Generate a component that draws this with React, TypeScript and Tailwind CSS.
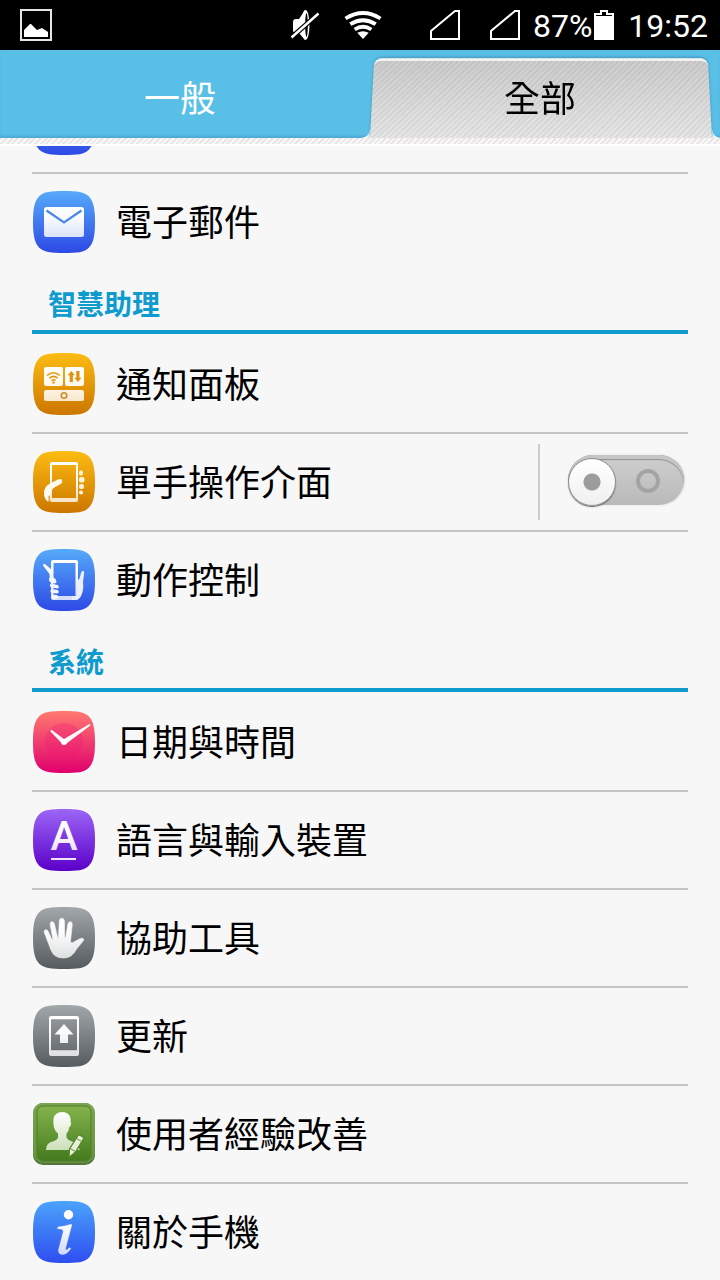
import type { ReactNode } from "react";
import { useState } from "react";

const SQUIRCLE =
  "M32 1c13 0 20.5 .8 25 5.5S63 19 63 32s-1.3 20.5-6 25.5S45 63 32 63s-20.500-.8-25-5.500S1 45 1 32 2.300 11.500 7 6.500 19 1 32 1z";

function AppIcon({
  id,
  from,
  to,
  children,
}: {
  id: string;
  from: string;
  to: string;
  children?: ReactNode;
}) {
  return (
    <svg viewBox="0 0 64 64" className="size-16 shrink-0" aria-hidden="true">
      <defs>
        <linearGradient id={`${id}-bg`} x1="0" y1="0" x2="0" y2="1">
          <stop offset="0" stopColor={from} />
          <stop offset="1" stopColor={to} />
        </linearGradient>
        <linearGradient
          id={`${id}-fg`}
          gradientUnits="userSpaceOnUse"
          x1="0"
          y1="12"
          x2="0"
          y2="54"
        >
          <stop offset="0" stopColor="#fff" />
          <stop offset="0.4" stopColor="#fff" stopOpacity="0.96" />
          <stop offset="1" stopColor="#fff" stopOpacity="0.76" />
        </linearGradient>
      </defs>
      <path d={SQUIRCLE} fill={`url(#${id}-bg)`} />
      {children}
    </svg>
  );
}

function MailIcon() {
  return (
    <AppIcon id="mail" from="#56aafa" to="#2d49e6">
      <rect x="12" y="17" width="40" height="30" rx="2.5" fill="url(#mail-fg)" />
      <path
        d="M14.5 20.5 32 32.5l17.5-12"
        fill="none"
        stroke="#4a87e8"
        strokeWidth="2.2"
      />
    </AppIcon>
  );
}

function PanelIcon() {
  return (
    <AppIcon id="panel" from="#fcbc12" to="#cc7600">
      <rect x="12" y="15" width="19" height="19" rx="2" fill="url(#panel-fg)" />
      <rect x="33" y="15" width="19" height="19" rx="2" fill="url(#panel-fg)" />
      <rect x="12" y="38" width="40" height="11" rx="2" fill="url(#panel-fg)" />
      <g fill="none" stroke="#e59a10" strokeWidth="1.6">
        <path d="M15 23.5q6.5-5.5 13 0M17.3 26.2q4.2-3.6 8.4 0M19.5 28.6q2-1.7 4 0" />
        <circle cx="32" cy="43.5" r="2.7" stroke="#c98a2a" />
      </g>
      <circle cx="21.5" cy="30.5" r="1.2" fill="#e59a10" />
      <path
        d="m39.3 19-3.6 4.3h2V30h3.2v-6.700h2zM45.900 30l-3.600-4.300h2V19h3.200v6.700h2z"
        fill="#e0920e"
      />
    </AppIcon>
  );
}

function OneHandIcon() {
  return (
    <AppIcon id="onehand" from="#fcbc12" to="#cc7600">
      <path
        d="M20 12h24q2 0 2 2v36q0 2-2 2H20q-2 0-2-2V14q0-2 2-2zm0 3v33h24V15z"
        fill="url(#onehand-fg)"
        fillRule="evenodd"
      />
      <path
        d="M15.500 51.500q-3.500-3-3.500-8.500 0-6.500 6-9.500l8-4q3-1.500 4 .8.900 2.300-1.500 3.600L21.500 38q-2 1.500-2.500 5l-1.500 3v5z"
        fill="#fffaf0"
      />
      <path d="M17 52v-6" stroke="#dd9412" strokeWidth="1" />
      <g fill="#fdf1dc">
        <rect x="47" y="20.5" width="4" height="5" rx="1.7" />
        <rect x="47" y="27" width="5.5" height="5.5" rx="2" />
        <rect x="47" y="34" width="5" height="5" rx="2" />
        <rect x="47" y="40.5" width="4" height="4" rx="1.7" />
      </g>
    </AppIcon>
  );
}

function MotionIcon() {
  return (
    <AppIcon id="motion" from="#56aafa" to="#2d49e6">
      <path
        d="M21 12h23q2 0 2 2v36q0 2-2 2H21q-2 0-2-2V14q0-2 2-2zm.500 3v33h22V15z"
        fill="url(#motion-fg)"
        fillRule="evenodd"
      />
      <path
        d="M45 33q3-2 3.500-6t2.500-4.300q1.500.3 1 3.800l-1 7.500q1 8-1.500 13-2 5-6 5h-4l1-4h4.500z"
        fill="#e8eefe"
      />
      <path
        d="M11 17.500q-.3-2.300 2.300-1.300L20 22v13l-2-1-.5-8z"
        fill="#f8faff"
      />
      <g fill="#f2f6ff">
        <path d="M18.500 29q5 0 6 4.500.3 2-2 2l-4-1.500q-2-1-1.500-3.500z" />
        <path d="M19 35.500l6.500 1.500q2.300 1.500.5 3.500l-6.500-1q-3-1.500-.5-4z" />
        <path d="M19.500 41l6 1q2.300 1.500.5 3.500l-6-.5q-3-1.500-.5-4z" />
        <path d="M20 46.500l5 .5q2 1.200.5 3l-3.500 1.500q-4.500-1.500-2-5z" />
      </g>
    </AppIcon>
  );
}

function ClockIcon() {
  return (
    <AppIcon id="clock" from="#ff7a70" to="#e0006c">
      <circle cx="32" cy="32" r="19" fill="#f2107a" fillOpacity="0.25" />
      <path
        d="m19.500 19.800 12.500 9.200 25.500-15q1.500.200.500 1.800L34.500 33.500q-2.500 1.500-5-.5L18.500 21.500q-.2-1.500 1-1.700z"
        fill="url(#clock-fg)"
      />
      <circle cx="32" cy="32" r="3" fill="#fff" />
    </AppIcon>
  );
}

function LanguageIcon() {
  return (
    <AppIcon id="lang" from="#9c66f6" to="#5a00c8">
      <text
        x="32"
        y="42"
        textAnchor="middle"
        fontSize="41"
        fontWeight="500"
        fill="url(#lang-fg)"
        className="font-['Roboto',sans-serif]"
      >
        A
      </text>
      <path d="M19 51h25" stroke="#f0e4fc" strokeWidth="2" />
    </AppIcon>
  );
}

function HandIcon() {
  return (
    <AppIcon id="hand" from="#a2a7aa" to="#555b5f">
      <path
        d="M12.300 26.500q-.6-2.300 1.200-2.800 1.800-.3 2.700 1.700l3.600 7.900q.7 1 1.100-.2L18.200 18.500q-.2-2.500 1.500-2.800 2-.2 2.600 2l3.200 13.500q.5 1 1 0l.8-16q.2-3 2.500-3t2.600 3l.3 16q.5 1 1 0l2.200-13q.5-2.800 2.600-2.500 2 .4 1.700 3l-1.700 16.500q.2 2 2 1.500l7.500-4q2.500-1.200 3.500.3.700 1.300-1.200 3L44.500 43q-4.500 9-13 9-9.500 0-12.500-8z"
        fill="url(#hand-fg)"
        stroke="#f4f4f4"
        strokeWidth=".7"
      />
    </AppIcon>
  );
}

function UpdateIcon() {
  return (
    <AppIcon id="update" from="#a2a7aa" to="#555b5f">
      <path
        d="M19 12h26q2 0 2 2v36q0 2-2 2H19q-2 0-2-2V14q0-2 2-2zm0 3.300v31h26v-31z"
        fill="url(#update-fg)"
        fillRule="evenodd"
      />
      <path d="m32 20 9.500 10.500H36v8.500h-8v-8.500h-5.500z" fill="url(#update-fg)" />
    </AppIcon>
  );
}

function UserIcon() {
  return (
    <svg viewBox="0 0 64 64" className="size-16 shrink-0" aria-hidden="true">
      <defs>
        <linearGradient id="user-bg" x1="0" y1="0" x2="0" y2="1">
          <stop offset="0" stopColor="#84b34c" />
          <stop offset="1" stopColor="#447a1e" />
        </linearGradient>
        <linearGradient id="user-edge" x1="0" y1="0" x2="0" y2="1">
          <stop offset="0" stopColor="#7aa44e" />
          <stop offset="1" stopColor="#66923e" />
        </linearGradient>
        <linearGradient id="user-fg" x1="0" y1="0" x2="0" y2="1">
          <stop offset="0" stopColor="#fff" />
          <stop offset="1" stopColor="#cddfba" />
        </linearGradient>
      </defs>
      <rect x="1" y="1" width="62" height="62" rx="10" fill="#55743c" />
      <rect x="1" y="1" width="62" height="60" rx="10" fill="url(#user-edge)" />
      <rect x="5" y="4" width="54" height="55" rx="6" fill="url(#user-bg)" stroke="#4f7f2a" />
      <path
        d="M30 10q8 0 8.800 7.500l-.3 2.500q1.300.5.300 3-.6 2-1.600 2.200Q37 29 34.500 31.500v4q1 2.500 5 3.700l3.500 1.500L48 48H14q0-6 5-8 6-1.500 7-4.500v-4q-3.500-3-4-6-1-5-.5-9Q23 10 30 10z"
        fill="url(#user-fg)"
      />
      <path
        d="m47.500 33 3.500 2q1 .7.500 1.700L43.500 50 37 55.500l.5-8.500 8.500-13.500q.5-.8 1.500-.5z"
        fill="#e6efda"
        stroke="#4f8427"
        strokeWidth="1.2"
      />
      <path d="m44.500 36.500 5 3M38 46.500l5.500 3" stroke="#5d9031" strokeWidth="1" />
    </svg>
  );
}

function InfoIcon() {
  return (
    <AppIcon id="info" from="#4aa3fb" to="#2f4df0">
      <circle cx="36.500" cy="14.700" r="4.700" fill="#fff" />
      <path
        d="M26 27q6.500-.5 13-2.700l.9.500-6.200 23q-.5 2.400.7 2.300 1.400-.2 3-2.500l1.400.9q-3.700 6-8.300 6-5-.2-3.800-5.400l4.500-17q.5-2.600-1.500-2.900l-4.300-.6z"
        fill="url(#info-fg)"
        stroke="#fff"
        strokeOpacity="0.6"
        strokeWidth=".6"
      />
    </AppIcon>
  );
}

function SignalIcon() {
  return (
    <svg viewBox="0 0 30 30" className="size-[30px]" aria-hidden="true">
      <path d="M1 29v-8L25 1h4v28z" fill="none" stroke="#fff" strokeWidth="2" />
    </svg>
  );
}

function StatusBar() {
  return (
    <div className="flex h-[50px] items-center bg-black pr-3 pl-5 font-['Roboto',sans-serif] text-[32px] leading-8 text-white">
      <svg viewBox="0 0 32 32" className="size-8" aria-hidden="true">
        <rect x="1" y="1" width="30" height="30" fill="none" stroke="#e6e6e6" strokeWidth="2" />
        <path d="M4 28v-7l6-6h1l6 6 5-2 6 4v5z" fill="#fff" />
      </svg>
      <svg viewBox="0 0 30 30" className="ml-auto size-[30px]" aria-hidden="true">
        <path d="M3 12q0-3 3-3h3l6-9v30l-6-7H6q-3 0-3-3z" fill="#fff" />
        <ellipse cx="15.500" cy="15" rx="4" ry="15" fill="#fff" />
        <ellipse cx="16.500" cy="15" rx="1.300" ry="12" fill="#000" />
        <path d="M1.500 27.500 28.500 3.500" stroke="#000" strokeWidth="5" />
        <path d="M1.500 27.500 28.500 3.500" stroke="#fff" strokeWidth="2.500" />
      </svg>
      <svg viewBox="0 0 38 28" className="ml-6 h-7 w-[38px]" aria-hidden="true">
        <g fill="none" stroke="#fff" strokeWidth="3.800">
          <path d="M1.500 7.500q17.500-11 35 0" />
          <path d="M6.300 13.200q12.700-8 25.400 0" />
          <path d="M10.700 18.500q8.300-5.500 16.600 0" />
        </g>
        <path d="M13.300 21.800q5.700-3.200 11.400 0L19 28z" fill="#fff" />
      </svg>
      <div className="mr-[13px] ml-12 flex gap-[30px]">
        <SignalIcon />
        <SignalIcon />
      </div>
      <span className="pt-0.5">87%</span>
      <svg viewBox="0 0 20 30" className="ml-0.5 h-[30px] w-5" aria-hidden="true">
        <path d="M6 0h8v3h6v27H0V3h6z" fill="#fff" />
        <path d="M8 2h4v3h6v1H2V5h6z" fill="#000" />
      </svg>
      <span className="ml-3.5 pt-0.5">19:52</span>
    </div>
  );
}

const tabs = ["一般", "全部"];

function Tabs() {
  const [active, setActive] = useState(1);

  return (
    <div
      role="tablist"
      className="flex h-[88px] bg-[#5abfe6] shadow-[inset_0_-3px_3px_-1px_#4aa9d2]"
    >
      {tabs.map((tab, i) => (
        <button
          key={tab}
          type="button"
          role="tab"
          aria-selected={active === i}
          onClick={() => setActive(i)}
          className={
            active === i
              ? "relative flex-1 overflow-hidden text-black"
              : "relative flex-1 text-white"
          }
        >
          {active === i && (
            <>
              <span className="absolute bottom-0 left-0.5 size-2 bg-[radial-gradient(circle_at_top_left,transparent_7px,#f4f4f4_8px)]" />
              <span className="absolute right-0 bottom-0 size-2 bg-[radial-gradient(circle_at_top_right,transparent_7px,#f4f4f4_8px)]" />
              <span className="absolute top-1.5 right-2 bottom-0 left-2.5 origin-bottom rounded-t-lg border-t-3 border-[#f2f2f2] bg-[repeating-linear-gradient(135deg,#0000000d_0_2px,#ffffff0d_2px_4px),linear-gradient(#cbcbcb,#e6e6e6)] shadow-[0_-1px_3px_#3a8fb9] [transform:perspective(200px)_rotateX(3.5deg)]" />
            </>
          )}
          <span className="relative block pt-3 text-4xl leading-10">{tab}</span>
        </button>
      ))}
    </div>
  );
}

function Switch({ label }: { label: string }) {
  const [on, setOn] = useState(false);

  return (
    <input
      type="checkbox"
      role="switch"
      aria-label={label}
      checked={on}
      onChange={() => setOn(!on)}
      className="mr-1 mb-1 flex h-[50px] w-[116px] appearance-none items-center justify-between rounded-full bg-linear-to-b from-[#cfcfcf] to-[#b9b9b9] pr-6 shadow-[inset_0_4px_0_#c6c6c6,inset_0_5px_1px_#8e8e8e,1px_0_2px_#d8d8d8] before:mt-1 before:size-12 before:rounded-full before:border before:border-[#8f8f8f] before:bg-[radial-gradient(circle,#9c9c9c_8px,transparent_9px),linear-gradient(#ffffff,#f0f0f0)] before:shadow-[0_1px_1px_#666666] before:content-[''] after:mt-0.5 after:size-6 after:rounded-full after:border-4 after:border-[#a3a3a3] after:content-[''] checked:flex-row-reverse checked:from-[#7fd0ef] checked:to-[#5abfe6] checked:pr-0 checked:pl-6"
    />
  );
}

type Item = { label: string; icon: ReactNode; toggle?: boolean };

const groups: { title?: string; items: Item[] }[] = [
  { items: [{ label: "電子郵件", icon: <MailIcon /> }] },
  {
    title: "智慧助理",
    items: [
      { label: "通知面板", icon: <PanelIcon /> },
      { label: "單手操作介面", icon: <OneHandIcon />, toggle: true },
      { label: "動作控制", icon: <MotionIcon /> },
    ],
  },
  {
    title: "系統",
    items: [
      { label: "日期與時間", icon: <ClockIcon /> },
      { label: "語言與輸入裝置", icon: <LanguageIcon /> },
      { label: "協助工具", icon: <HandIcon /> },
      { label: "更新", icon: <UpdateIcon /> },
      { label: "使用者經驗改善", icon: <UserIcon /> },
      { label: "關於手機", icon: <InfoIcon /> },
    ],
  },
];

function Row({ item }: { item: Item }) {
  return (
    <li className="flex items-center">
      <a href="#" className="flex h-24 flex-1 items-center gap-5">
        {item.icon}
        <span className="pt-1 text-4xl leading-10">{item.label}</span>
      </a>
      {item.toggle && (
        <div className="flex h-[76px] items-center border-l-2 border-[#cccccc] pl-7">
          <Switch label={item.label} />
        </div>
      )}
    </li>
  );
}

export default function App() {
  return (
    <div className="min-h-screen bg-[#f7f7f7] font-['Liberation_Sans','Noto_Sans_CJK_TC',sans-serif] text-black">
      <header>
        <StatusBar />
        <Tabs />
        <div className="h-2 border-b-2 border-white bg-[repeating-linear-gradient(135deg,#e9e6e4_0_2px,#f8f8f8_2px_4px)]" />
      </header>
      <main className="px-8">
        {/* the row above the first visible one, scrolled under the tabs */}
        <div className="flex h-7 flex-col justify-end overflow-hidden border-b-2 border-[#c4c4c4] pb-4">
          <AppIcon id="prev" from="#56aafa" to="#2d49e6" />
        </div>
        {groups.map((group) => (
          <section key={group.items[0].label}>
            {group.title && (
              <h2 className="mb-0.5 h-16 border-b-4 border-[#0f9bce] px-4 pt-4 text-[28px] leading-10 font-bold text-[#0f9bce]">
                {group.title}
              </h2>
            )}
            <ul className="divide-y-2 divide-[#c4c4c4]">
              {group.items.map((item) => (
                <Row key={item.label} item={item} />
              ))}
            </ul>
          </section>
        ))}
      </main>
    </div>
  );
}
